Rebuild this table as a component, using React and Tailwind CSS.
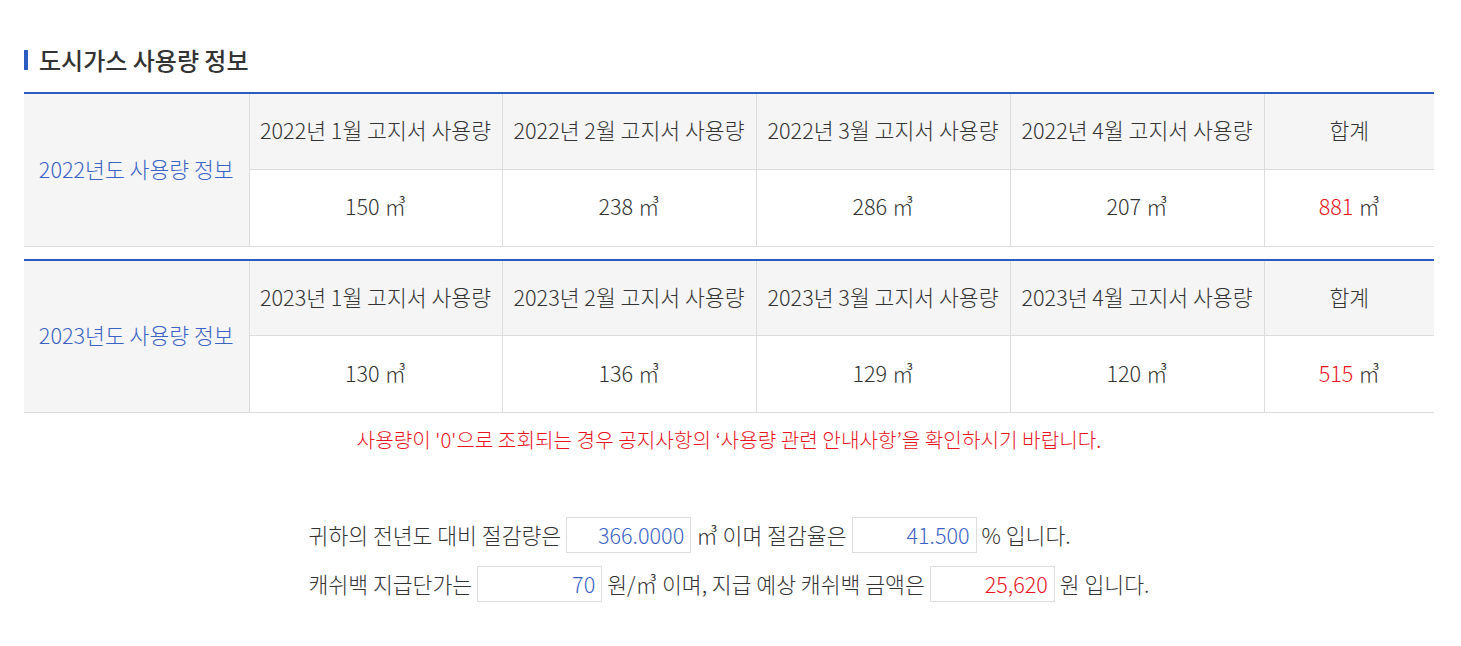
import React from "react";

const font = { fontFamily: '"Noto Sans CJK KR", "Noto Sans", sans-serif' };

function UsageTable({ year, values, total }) {
  return (
    <table className="w-[1410px] table-fixed border-collapse border-t-2 border-[#2b5cc0] text-[21.6px] font-light text-[#333]">
      <colgroup>
        <col className="w-[225px]" />
        <col className="w-[253px]" />
        <col className="w-[254px]" />
        <col className="w-[254px]" />
        <col className="w-[254px]" />
        <col className="w-[170px]" />
      </colgroup>
      <tbody>
        <tr className="h-[76px]">
          <td rowSpan={2} className="border-b border-r border-[#dcdcdc] bg-[#f5f5f5] pb-[2px] text-center text-[#3a63c4]">
            {year}년도 사용량 정보
          </td>
          {[1, 2, 3, 4].map((m) => (
            <td key={m} className="border-b border-r border-[#dcdcdc] bg-[#f5f5f5] pb-[2px] text-center whitespace-nowrap">
              {year}년 {m}월 고지서 사용량
            </td>
          ))}
          <td className="border-b border-[#dcdcdc] bg-[#f5f5f5] pb-[2px] text-center">합계</td>
        </tr>
        <tr className="h-[77px]">
          {values.map((v, i) => (
            <td key={i} className="border-b border-r border-[#dcdcdc] bg-white pb-[2px] text-center">
              {v} ㎥
            </td>
          ))}
          <td className="border-b border-[#dcdcdc] bg-white pb-[2px] text-center">
            <span className="text-[#e8141e]">{total}</span> ㎥
          </td>
        </tr>
      </tbody>
    </table>
  );
}

function Box({ children, red }) {
  return (
    <span
      className={`inline-block h-[36px] w-[125px] border border-[#dcdcdc] bg-white px-[6px] text-right align-middle leading-[34px] ${
        red ? "text-[#e8141e]" : "text-[#3a63c4]"
      }`}
    >
      {children}
    </span>
  );
}

export default function App() {
  return (
    <div className="min-h-[646px] bg-white px-[24px] pt-[43px]" style={font}>
      <div className="flex items-center gap-[11px]">
        <span className="h-[20px] w-[4px] bg-[#2b5cc0]" />
        <h2 className="text-[24px] font-medium leading-[34px] text-[#333]">도시가스 사용량 정보</h2>
      </div>
      <div className="mt-[15px] flex flex-col gap-[12px]">
        <UsageTable year="2022" values={[150, 238, 286, 207]} total="881" />
        <UsageTable year="2023" values={[130, 136, 129, 120]} total="515" />
      </div>
      <p className="mt-[13px] w-[1410px] text-center text-[20.2px] font-light leading-[28px] text-[#e8141e]">
        사용량이 '0'으로 조회되는 경우 공지사항의 ‘사용량 관련 안내사항’을 확인하시기 바랍니다.
      </p>
      <div className="mt-[63px] flex w-[1410px] justify-center">
        <div className="flex flex-col gap-[13px] text-[21.6px] font-light text-[#333]">
          <div className="flex items-center gap-[5px]">
            <span>귀하의 전년도 대비 절감량은</span>
            <Box>366.0000</Box>
            <span>㎥ 이며 절감율은</span>
            <Box>41.500</Box>
            <span>% 입니다.</span>
          </div>
          <div className="flex items-center gap-[5px]">
            <span>캐쉬백 지급단가는</span>
            <Box>70</Box>
            <span>원/㎥ 이며, 지급 예상 캐쉬백 금액은</span>
            <Box red>25,620</Box>
            <span>원 입니다.</span>
          </div>
        </div>
      </div>
    </div>
  );
}
